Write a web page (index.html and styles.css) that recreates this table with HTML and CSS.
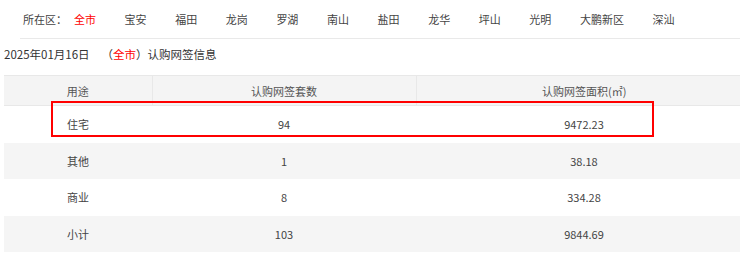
FILE: index.html
```html
<!DOCTYPE html>
<html lang="zh-CN">
<head>
<meta charset="utf-8">
<title>认购网签信息</title>
<link rel="stylesheet" href="styles.css">
</head>
<body>
<div class="page">
  <div class="nav">
    <span class="nav-label">所在区：</span>
    <ul class="nav-list">
      <li class="active">全市</li>
      <li>宝安</li>
      <li>福田</li>
      <li>龙岗</li>
      <li>罗湖</li>
      <li>南山</li>
      <li>盐田</li>
      <li>龙华</li>
      <li>坪山</li>
      <li>光明</li>
      <li>大鹏新区</li>
      <li>深汕</li>
    </ul>
  </div>
  <div class="title">2025年01月16日<span class="paren">（<em>全市</em>）</span>认购网签信息</div>
  <div class="table-wrap">
    <table class="data">
      <colgroup>
        <col class="c1"><col class="c2"><col class="c3">
      </colgroup>
      <thead>
        <tr><th>用途</th><th>认购网签套数</th><th>认购网签面积(㎡)</th></tr>
      </thead>
      <tbody>
        <tr><td>住宅</td><td>94</td><td>9472.23</td></tr>
        <tr><td>其他</td><td>1</td><td>38.18</td></tr>
        <tr><td>商业</td><td>8</td><td>334.28</td></tr>
        <tr><td>小计</td><td>103</td><td>9844.69</td></tr>
      </tbody>
    </table>
    <div class="highlight"></div>
  </div>
</div>
</body>
</html>
```

FILE: styles.css
```css
html, body {
  margin: 0;
  padding: 0;
  background: #fff;
  overflow: hidden;
}
body {
  font-family: "Noto Sans CJK SC", "Noto Sans", sans-serif;
  color: #333;
  width: 740px;
  height: 254px;
}
.page {
  width: 760px;
}
.nav {
  display: flex;
  align-items: center;
  height: 38px;
  margin-left: 20px;
  padding-left: 3px;
  border-bottom: 1px solid #e9e9e9;
  font-size: 11px;
  color: #444;
}
.nav-label {
  width: 51px;
}
.nav-list {
  display: flex;
  gap: 28.6px;
  list-style: none;
  margin: 0;
  padding: 0;
}
.nav-list li.active {
  color: #f00;
}
.title {
  font-size: 11.5px;
  line-height: 20px;
  margin-top: 5px;
  padding-left: 4px;
  color: #333;
}
.title .paren {
  margin-left: 12px;
}
.title em {
  font-style: normal;
  color: #f00;
}
.table-wrap {
  position: relative;
  margin-top: 11px;
  padding-left: 4px;
}
.data {
  width: 748px;
  border-collapse: collapse;
  table-layout: fixed;
  font-size: 11px;
  color: #444;
}
.data .c1 { width: 148px; }
.data .c2 { width: 264px; }
.data .c3 { width: 336px; }
.data th {
  font-weight: normal;
  height: 29px;
  padding: 0;
  background: #f4f4f4;
  border-top: 1px solid #e8e8e8;
  border-bottom: 1px solid #e8e8e8;
  border-left: 1px solid #e8e8e8;
  text-align: center;
  color: #555;
}
.data th:first-child {
  border-left: none;
}
.data td {
  height: 36.5px;
  padding: 0;
  text-align: center;
}
.data tbody tr:nth-child(even) td {
  background: #f5f5f5;
}
.highlight {
  position: absolute;
  left: 51px;
  top: 26px;
  width: 603px;
  height: 36px;
  box-sizing: border-box;
  border: 2px solid #f00;
}
```
